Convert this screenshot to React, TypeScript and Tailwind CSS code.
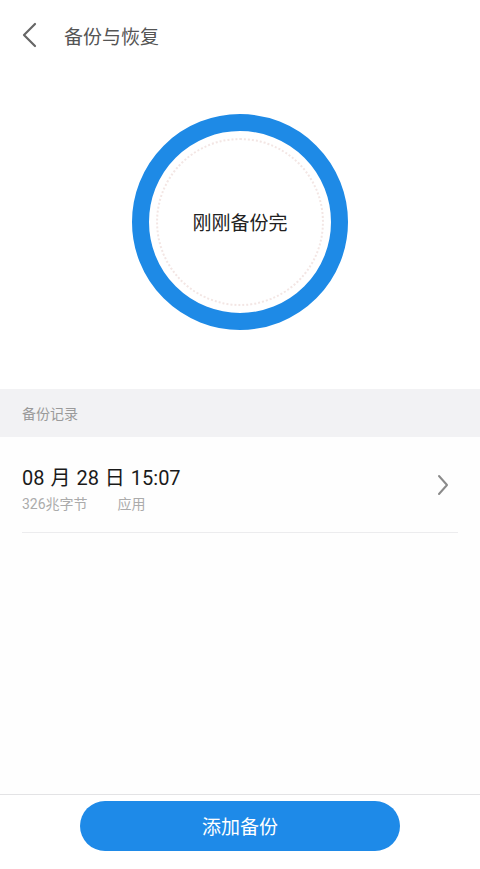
import React from 'react';

const font = { fontFamily: '"Noto Sans CJK SC", "Noto Sans", sans-serif' };
const numFont = { fontFamily: 'Roboto, "Noto Sans CJK SC", sans-serif' };

const App: React.FC = () => {
  return (
    <div className="w-[480px] h-[869px] bg-white flex flex-col" style={font}>
      {/* Header */}
      <div className="h-[72px] flex items-center pl-[20px] pb-[2px]">
        <svg width="20" height="28" viewBox="0 0 20 28" className="mr-[24px]">
          <path d="M15 3 L4 14 L15 25" fill="none" stroke="#666" strokeWidth="2.2" strokeLinecap="round" strokeLinejoin="round" />
        </svg>
        <h1 className="text-[19px] text-[#555] leading-none">备份与恢复</h1>
      </div>

      {/* Status ring */}
      <div className="h-[317px] flex items-start justify-center pt-[42px]">
        <div className="relative w-[216px] h-[216px] rounded-full border-[17px] border-[#1e8ae6] flex items-center justify-center">
          <div className="absolute inset-[7px] rounded-full border-2 border-dotted border-[#f3e6e4]" />
          <span className="text-[19px] text-[#222]">刚刚备份完</span>
        </div>
      </div>

      {/* Section label */}
      <div className="h-[48px] bg-[#f2f2f4] flex items-center px-[22px]">
        <span className="text-[14px] text-[#9a9a9a]">备份记录</span>
      </div>

      {/* Record row */}
      <div className="bg-[#fefefe] flex-1 flex flex-col">
        <div className="mx-[22px] h-[96px] border-b border-[#ececee] flex items-center justify-between">
          <div className="flex flex-col pt-[8px]">
            <span className="text-[20px] text-[#1a1a1a] leading-[26px] [word-spacing:1px]" style={numFont}>08 月 28 日 15:07</span>
            <div className="text-[14px] text-[#ababab] mt-[4px] leading-[18px] flex" style={numFont}>
              <span>326兆字节</span>
              <span className="ml-[30px]">应用</span>
            </div>
          </div>
          <svg width="14" height="22" viewBox="0 0 14 22" className="mr-[8px]">
            <path d="M3 2 L11 11 L3 20" fill="none" stroke="#8a8a8a" strokeWidth="2" strokeLinecap="round" strokeLinejoin="round" />
          </svg>
        </div>
      </div>

      {/* Bottom bar */}
      <div className="h-[75px] border-t border-[#e3e3e5] bg-white flex justify-center pt-[6px]">
        <button className="w-[320px] h-[50px] rounded-full bg-[#1e8ae8] text-white text-[19px]">
          添加备份
        </button>
      </div>
    </div>
  );
};

export default App;
